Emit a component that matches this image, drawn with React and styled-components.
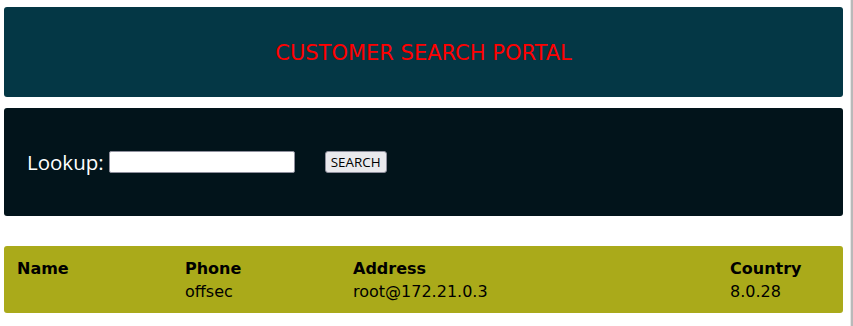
import React from 'react';
import styled, { createGlobalStyle } from 'styled-components';

const GlobalStyle = createGlobalStyle`
  html, body {
    margin: 0;
    padding: 0;
    background: #ffffff;
  }
  body {
    font-family: "DejaVu Sans", sans-serif;
  }
`;

const Page = styled.div`
  display: flex;
  width: 853px;
  min-height: 326px;
`;

const Column = styled.div`
  width: 839px;
  margin: 7px 0 0 4px;
  display: flex;
  flex-direction: column;
`;

const EdgeStrip = styled.div`
  margin-left: auto;
  width: 2px;
  background: #b9b9b9;
  border-left: 1px solid #e6e6e6;
`;

const Panel = styled.div`
  background: ${props => props.bg};
  border-radius: 3px;
  height: ${props => props.h}px;
  margin-top: ${props => props.gap || 0}px;
  box-sizing: border-box;
`;

const Header = styled(Panel)`
  display: flex;
  align-items: center;
  justify-content: center;
`;

const Title = styled.h1`
  margin: 0;
  font-family: "DejaVu Sans", sans-serif;
  font-weight: normal;
  font-size: 21px;
  color: #ff0000;
  padding-top: 1px;
`;

const SearchForm = styled(Panel).attrs({ as: 'form' })`
  display: flex;
  align-items: center;
  padding-left: 23px;
`;

const Label = styled.label`
  font-family: "Open Sans", sans-serif;
  font-size: 20.5px;
  color: #ffffff;
  margin-right: 5px;
`;

const Input = styled.input`
  width: 186px;
  height: 22px;
  box-sizing: border-box;
  border: 1px solid #8f8f9d;
  border-radius: 2px;
  background: #ffffff;
  padding: 0 3px;
`;

const Button = styled.button`
  margin-left: 30px;
  height: 22px;
  width: 62px;
  box-sizing: border-box;
  padding: 0;
  font-family: "Open Sans", sans-serif;
  font-size: 13.4px;
  color: #000000;
  background: #e9e9ed;
  border: 1px solid #8f8f9d;
  border-radius: 3px;
`;

const Table = styled.table`
  margin: 10px 0 0 10px;
  border-spacing: 2px;
  font-family: "DejaVu Sans", sans-serif;
  font-size: 16px;
  color: #000000;
`;

const Th = styled.th`
  text-align: left;
  padding: 1px;
  width: ${props => props.w}px;
`;

const Td = styled.td`
  padding: 1px;
`;

const columns = [
  { id: 'name', label: 'Name', w: 164 },
  { id: 'phone', label: 'Phone', w: 164 },
  { id: 'address', label: 'Address', w: 373 },
  { id: 'country', label: 'Country', w: 100 },
];

const rows = [
  { id: 1, name: '', phone: 'offsec', address: 'root@172.21.0.3', country: '8.0.28' },
];

export default function App() {
  return (
    <Page>
      <GlobalStyle />
      <Column>
        <Header bg="#043745" h={90}>
          <Title>CUSTOMER SEARCH PORTAL</Title>
        </Header>
        <SearchForm bg="#02141b" h={108} gap={11} onSubmit={e => e.preventDefault()}>
          <Label htmlFor="lookup">Lookup:</Label>
          <Input id="lookup" type="text" />
          <Button type="submit">SEARCH</Button>
        </SearchForm>
        <Panel bg="#aaaa1a" h={67} gap={30}>
          <Table>
            <thead>
              <tr>
                {columns.map(col => (
                  <Th key={col.id} w={col.w}>{col.label}</Th>
                ))}
              </tr>
            </thead>
            <tbody>
              {rows.map(row => (
                <tr key={row.id}>
                  {columns.map(col => (
                    <Td key={col.id}>{row[col.id]}</Td>
                  ))}
                </tr>
              ))}
            </tbody>
          </Table>
        </Panel>
      </Column>
      <EdgeStrip />
    </Page>
  );
}
